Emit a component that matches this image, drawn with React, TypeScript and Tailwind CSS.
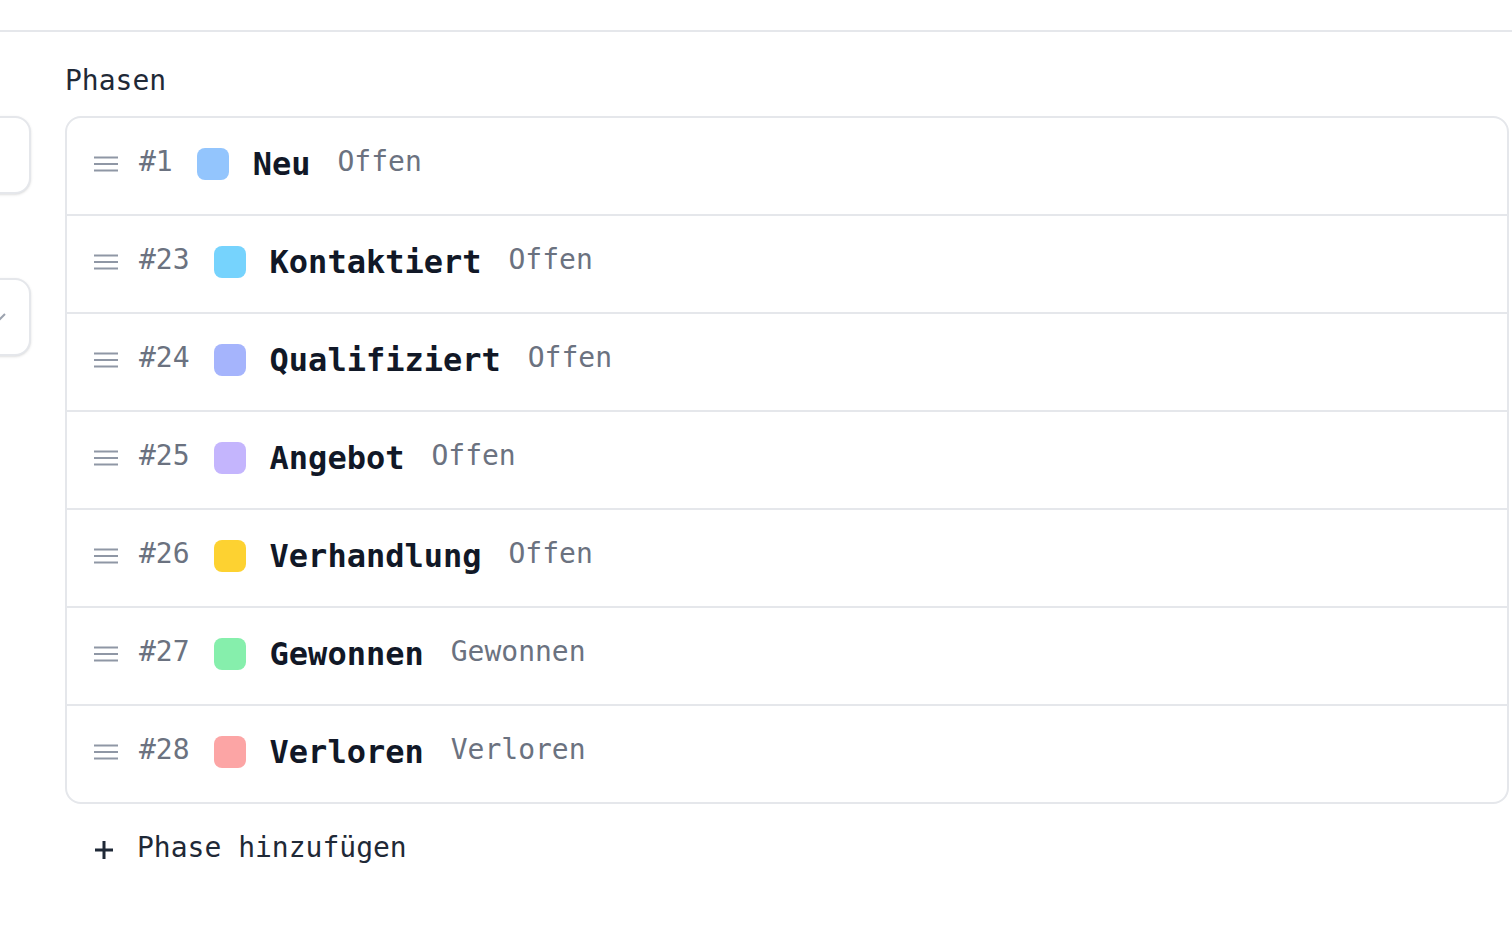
import React from "react";

const phases = [
  { id: "#1", name: "Neu", status: "Offen", color: "bg-[#93c5fd]" },
  { id: "#23", name: "Kontaktiert", status: "Offen", color: "bg-[#76d3fd]" },
  { id: "#24", name: "Qualifiziert", status: "Offen", color: "bg-[#a5b4fc]" },
  { id: "#25", name: "Angebot", status: "Offen", color: "bg-[#c4b5fd]" },
  { id: "#26", name: "Verhandlung", status: "Offen", color: "bg-[#fdd231]" },
  { id: "#27", name: "Gewonnen", status: "Gewonnen", color: "bg-[#86efac]" },
  { id: "#28", name: "Verloren", status: "Verloren", color: "bg-[#fca5a5]" },
];

function Handle() {
  return (
    <svg width="24" height="16" viewBox="0 0 24 16" className="shrink-0 mr-[-3px]">
      <path d="M0 1.5H24M0 8H24M0 14.5H24" stroke="#8f97a5" strokeWidth="2" />
    </svg>
  );
}

export default function App() {
  return (
    <div
      className="h-screen w-full overflow-hidden bg-white"
      style={{ fontFamily: '"DejaVu Sans Mono", "Liberation Mono", monospace' }}
    >
      <div className="h-[32px] border-b-2 border-[#e5e7eb]" />
      <div className="flex gap-[34px]">
        <div className="-ml-[300px] w-[331px] shrink-0 pt-[84px] flex flex-col gap-[84px]">
          <div className="h-[78px] rounded-[16px] border-2 border-[#e5e7eb] bg-white shadow-sm" />
          <div className="h-[78px] rounded-[16px] border-2 border-[#e5e7eb] bg-white shadow-sm flex items-center justify-end pr-[23px]">
            <svg width="14" height="8" viewBox="0 0 14 8">
              <path d="M1 1L7 7L13 1" fill="none" stroke="#9ca3af" strokeWidth="2" />
            </svg>
          </div>
        </div>
        <div className="flex-1 mr-[3px]">
          <div className="pt-[29px] h-[84px] text-[28px] leading-[40px] text-[#1f2937] font-medium">
            Phasen
          </div>
          <div className="rounded-[16px] border-2 border-[#e5e7eb] bg-white">
            {phases.map((p, i) => (
              <div
                key={p.id}
                className={`flex items-center gap-[24px] pl-[27px] pb-[4px] ${
                  i > 0 ? "h-[98px] border-t-2 border-[#e5e7eb]" : "h-[96px]"
                }`}
              >
                <Handle />
                <span className="text-[28px] leading-none text-[#6b7280] mb-[4px]">{p.id}</span>
                <span className={`w-[32px] h-[32px] rounded-[8px] shrink-0 ${p.color}`} />
                <span className="text-[32px] leading-none font-bold text-[#111827]">{p.name}</span>
                <span className="text-[28px] leading-none text-[#6b7280] mb-[4px] ml-[3px]">{p.status}</span>
              </div>
            ))}
          </div>
          <div className="flex items-center gap-[23px] pl-[29px] pt-[26px]">
            <svg width="20" height="20" viewBox="0 0 20 20" className="mt-[4px]">
              <path d="M10 1V19M1 10H19" stroke="#1f2937" strokeWidth="3" />
            </svg>
            <span className="text-[28px] leading-[36px] text-[#1f2937] font-medium">
              Phase hinzufügen
            </span>
          </div>
        </div>
      </div>
    </div>
  );
}
